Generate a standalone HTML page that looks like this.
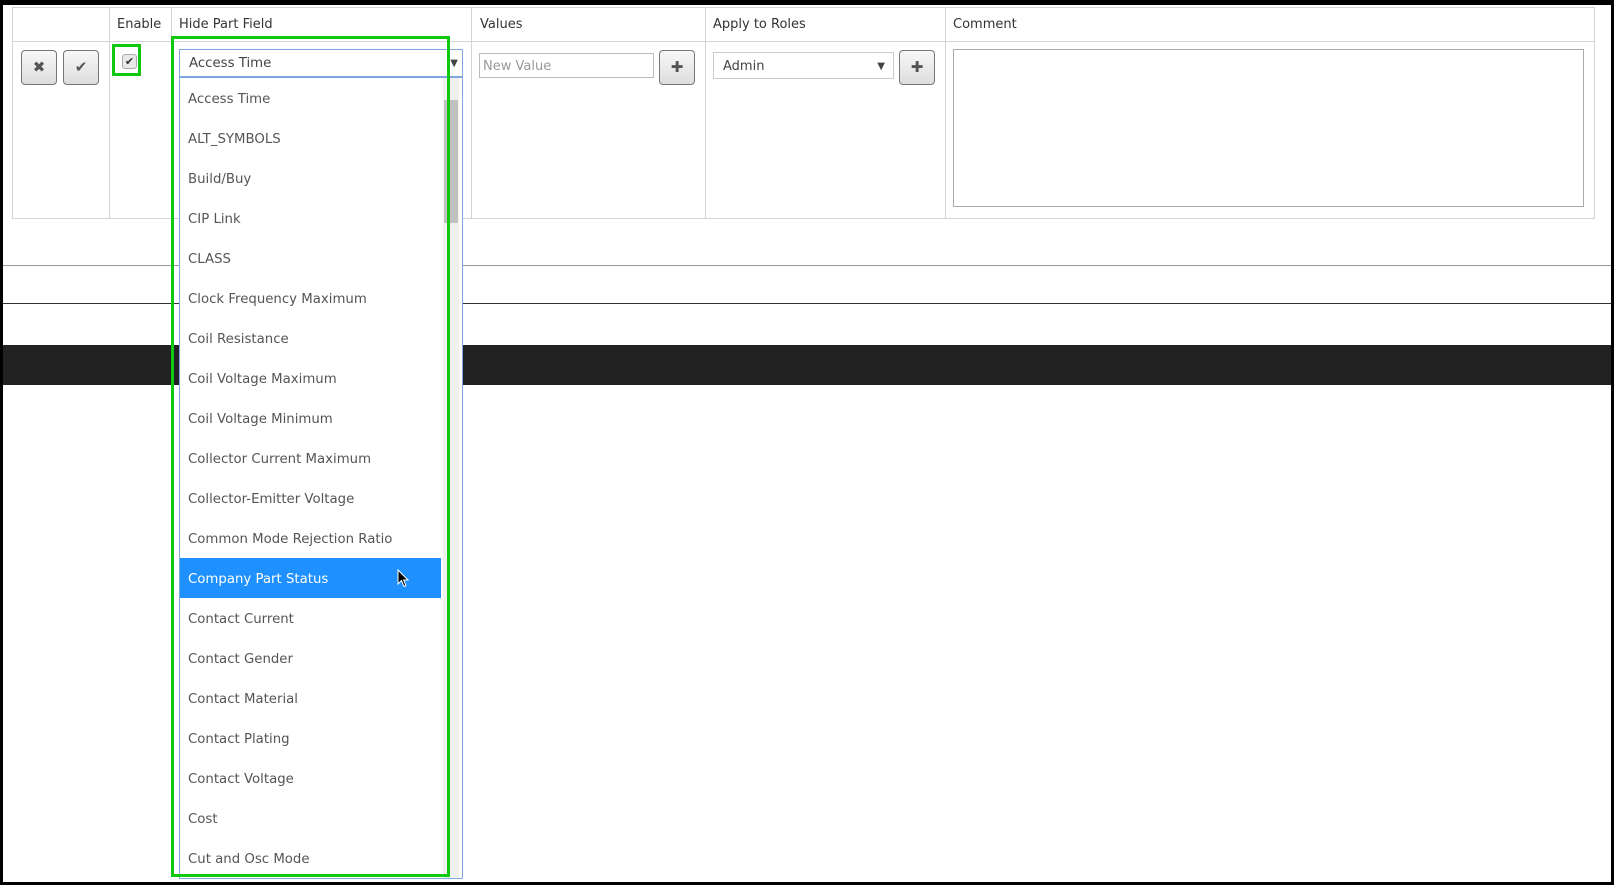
<!DOCTYPE html>
<html><head><style>
*{box-sizing:border-box;margin:0;padding:0}
body{width:1614px;height:885px;position:relative;background:#fff;font-family:"DejaVu Sans","Liberation Sans",sans-serif;font-size:13px;color:#444;overflow:hidden}
.a{position:absolute}
.frame{left:0;top:0;width:1614px;height:885px;border:3px solid #000;border-top-width:5px;z-index:50;pointer-events:none}
.vl{position:absolute;width:1px;background:#d4d4d4}
.hl{position:absolute;height:1px;background:#d4d4d4}
.th{position:absolute;top:17px;font-size:13px;color:#333}
.btn{position:absolute;width:36px;height:35px;border:1px solid #777;border-radius:4px;background:linear-gradient(#f8f8f8,#ddd);color:#555;font-size:15px;text-align:center;line-height:33px;font-weight:bold}
.item{position:absolute;left:180px;width:261px;height:40px;line-height:44px;padding-left:8px;color:#555;font-size:13.3px}
</style></head><body>
<div class="a frame"></div>
<div class="hl" style="left:12px;top:7px;width:1582px"></div>
<div class="hl" style="left:12px;top:41px;width:1582px"></div>
<div class="hl" style="left:12px;top:218px;width:1582px"></div>
<div class="vl" style="left:12px;top:7px;height:212px"></div>
<div class="vl" style="left:109px;top:7px;height:212px"></div>
<div class="vl" style="left:171px;top:7px;height:212px"></div>
<div class="vl" style="left:471px;top:7px;height:212px"></div>
<div class="vl" style="left:705px;top:7px;height:212px"></div>
<div class="vl" style="left:945px;top:7px;height:212px"></div>
<div class="vl" style="left:1594px;top:7px;height:212px"></div>
<div class="th" style="left:117px">Enable</div>
<div class="th" style="left:179px">Hide Part Field</div>
<div class="th" style="left:480px">Values</div>
<div class="th" style="left:713px">Apply to Roles</div>
<div class="th" style="left:953px">Comment</div>
<div class="btn" style="left:21px;top:50px">✖</div>
<div class="btn" style="left:63px;top:50px">✔</div>
<div class="a" style="left:122px;top:54px;width:15px;height:15px;border:1px solid #aaa;border-radius:3px;background:#e8e8e8;font-size:11px;line-height:13px;text-align:center;color:#333">✔</div>
<div class="a" style="left:112px;top:44px;width:29px;height:32px;border:3px solid #10c810"></div>
<div class="a" style="left:479px;top:53px;width:175px;height:25px;border:1px solid #bbb;color:#999;padding-left:3px;line-height:25px">New Value</div>
<div class="btn" style="left:659px;top:50px">✚</div>
<div class="a" style="left:713px;top:52px;width:181px;height:27px;border:1px solid #ccc;line-height:27px;padding-left:9px;color:#444">Admin<span style="position:absolute;right:8px;font-size:10px">▼</span></div>
<div class="btn" style="left:899px;top:50px">✚</div>
<div class="a" style="left:953px;top:49px;width:631px;height:158px;border:1px solid #aaa"></div>
<div class="a" style="left:0;top:265px;width:1614px;height:1px;background:#999"></div>
<div class="a" style="left:0;top:303px;width:1614px;height:1px;background:#333"></div>
<div class="a" style="left:0;top:345px;width:1614px;height:40px;background:#222"></div>
<div class="a" style="left:179px;top:49px;width:284px;height:28px;border:1px solid #7ea6e0;background:#fff;line-height:28px;padding-left:9px;color:#444;font-size:13.3px">Access Time<span style="position:absolute;right:4px;font-size:10px">▼</span></div>
<div class="a" style="left:179px;top:77px;width:284px;height:802px;border:1px solid #7ea6e0;background:#fff"></div>
<div class="a" style="left:443px;top:78px;width:16px;height:800px;background:#f0f0f0"></div>
<div class="a" style="left:444px;top:100px;width:14px;height:123px;background:#c1c1c1"></div>
<div class="item" style="top:78px">Access Time</div>
<div class="item" style="top:118px">ALT_SYMBOLS</div>
<div class="item" style="top:158px">Build/Buy</div>
<div class="item" style="top:198px">CIP Link</div>
<div class="item" style="top:238px">CLASS</div>
<div class="item" style="top:278px">Clock Frequency Maximum</div>
<div class="item" style="top:318px">Coil Resistance</div>
<div class="item" style="top:358px">Coil Voltage Maximum</div>
<div class="item" style="top:398px">Coil Voltage Minimum</div>
<div class="item" style="top:438px">Collector Current Maximum</div>
<div class="item" style="top:478px">Collector-Emitter Voltage</div>
<div class="item" style="top:518px">Common Mode Rejection Ratio</div>
<div class="item" style="top:558px;background:#1e90ff;color:#fff">Company Part Status</div>
<div class="item" style="top:598px">Contact Current</div>
<div class="item" style="top:638px">Contact Gender</div>
<div class="item" style="top:678px">Contact Material</div>
<div class="item" style="top:718px">Contact Plating</div>
<div class="item" style="top:758px">Contact Voltage</div>
<div class="item" style="top:798px">Cost</div>
<div class="item" style="top:838px">Cut and Osc Mode</div>
<svg class="a" style="left:397px;top:569px" width="14" height="20" viewBox="0 0 14 20"><path d="M1 1 L1 15 L4.5 11.5 L7 17.5 L9 16.7 L6.6 11 L11 11 Z" fill="#000" stroke="#fff" stroke-width="1"/></svg>
<div class="a" style="left:171px;top:36px;width:279px;height:841px;border:3px solid #10c810"></div>
</body></html>
